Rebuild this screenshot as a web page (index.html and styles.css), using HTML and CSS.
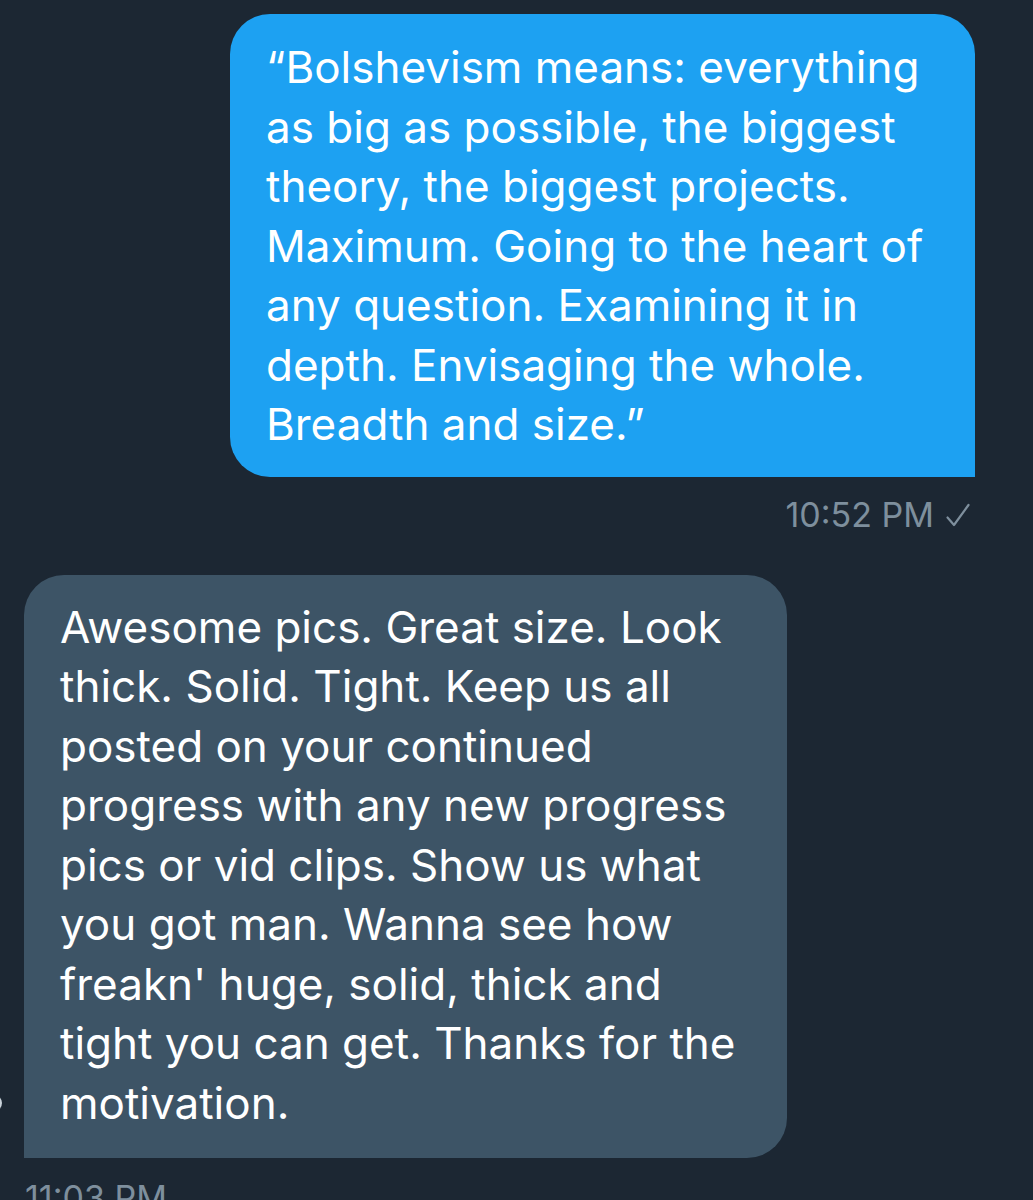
FILE: index.html
```html
<!DOCTYPE html>
<html>
<head>
<meta charset="utf-8">
<link rel="stylesheet" href="styles.css">
</head>
<body>
<div class="chat">
  <div class="row row-out">
    <div class="bubble bubble-out">“Bolshevism means: everything<br>as big as possible, the biggest<br>theory, the biggest projects.<br>Maximum. Going to the heart of<br>any question. Examining it in<br>depth. Envisaging the whole.<br>Breadth and size.”</div>
  </div>
  <div class="meta meta-out">
    <span>10:52 PM</span>
    <svg class="check" viewBox="0 0 24 24" width="24" height="24"><path d="M1.5 14.5 L8 22 L22.5 2" fill="none" stroke="#7e8f9d" stroke-width="2.2" stroke-linecap="round" stroke-linejoin="round"/></svg>
  </div>
  <div class="row row-in">
    <div class="avatar"></div>
    <div class="bubble bubble-in">Awesome pics. Great size. Look<br>thick. Solid. Tight. Keep us all<br>posted on your continued<br>progress with any new progress<br>pics or vid clips. Show us what<br>you got man. Wanna see how<br>freakn' huge, solid, thick and<br>tight you can get. Thanks for the<br>motivation.</div>
  </div>
  <div class="meta meta-in">
    <span>11:03 PM</span>
  </div>
</div>
</body>
</html>
```

FILE: styles.css
```css
html, body {
  margin: 0;
  padding: 0;
  background: #1c2733;
  height: 1200px;
  overflow: hidden;
}
.chat {
  display: flex;
  flex-direction: column;
  padding-top: 14px;
  font-family: Inter, "Noto Sans", sans-serif;
  -webkit-font-smoothing: antialiased;
}
.row {
  display: flex;
}
.row-out {
  justify-content: flex-end;
  padding-right: 58px;
}
.bubble {
  font-size: 44px;
  line-height: 59.5px;
  color: #ffffff;
  letter-spacing: 0;
  white-space: nowrap;
}
.bubble-out {
  background: #1da1f2;
  width: 745px;
  box-sizing: border-box;
  padding: 24px 36px 22px 36px;
  border-radius: 40px 40px 0 40px;
}
.meta {
  display: flex;
  align-items: center;
  gap: 12px;
  font-size: 34px;
  color: #7e8f9d;
  line-height: 40px;
}
.meta-out {
  justify-content: flex-end;
  padding-right: 63px;
  margin-top: 18px;
}
.check {
  width: 24px;
  height: 24px;
}
.row-in {
  margin-top: 40px;
  align-items: flex-end;
}
.avatar {
  width: 36px;
  height: 24px;
  margin-left: -34px;
  margin-bottom: 43px;
  border-radius: 50%;
  background: #c9d2da;
  flex: none;
}
.bubble-in {
  margin-left: 22px;
  background: #3d5466;
  width: 763px;
  box-sizing: border-box;
  padding: 23px 36px 25px 36px;
  border-radius: 40px 40px 40px 0;
}
.meta-in {
  padding-left: 25px;
  margin-top: 20px;
}
```
